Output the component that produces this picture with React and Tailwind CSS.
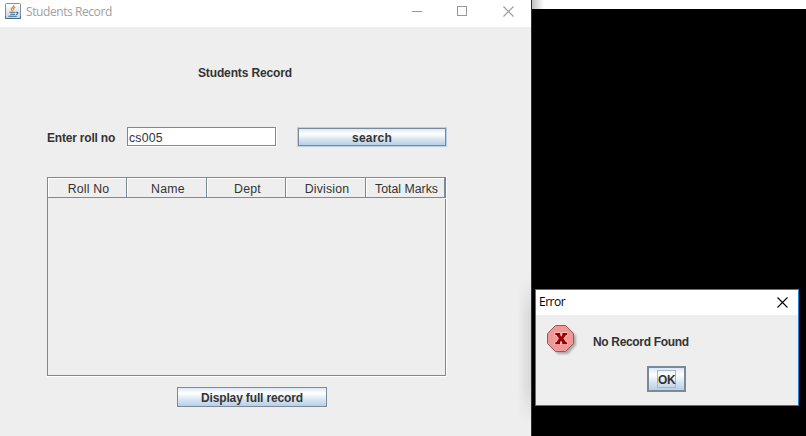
import React from "react";

const swing = "font-['Liberation_Sans',Arial,sans-serif] text-[12px] leading-[16px] text-[#333333] whitespace-nowrap";
const metal = "bg-[linear-gradient(to_bottom,#dde8f3_0%,#ffffff_30%,#dde8f3_60%,#b8cfe5_100%)]";

function JavaIcon() {
  return (
    <svg width="16" height="16" viewBox="0 0 16 16" fill="none">
      <defs>
        <linearGradient id="javaTile" x1="0" y1="0" x2="0" y2="1">
          <stop offset="0" stopColor="#ffffff" />
          <stop offset="1" stopColor="#ccd3da" />
        </linearGradient>
      </defs>
      <rect x="0.5" y="0.5" width="15" height="15" rx="1" fill="url(#javaTile)" stroke="#7890a4" />
      <path d="M.5 13V15.5H15.5V13" stroke="#44698a" />
      <path d="M8.8 2C9.4 4 5.8 5 6.4 6.6C6.6 7.3 7.5 7.6 7.5 8.3M10.3 4.2C8 5.3 8.2 6 8.8 6.9" stroke="#e58a35" strokeWidth="1.4" />
      <path d="M4.5 9.3H10.5M5.2 11.3H10M3.3 13.3H11.8M11 9.3C13.8 8.8 13.2 11 11.2 11.6" stroke="#3b6e98" strokeWidth="1.1" />
    </svg>
  );
}

function ErrorIcon() {
  return (
    <svg width="32" height="32" viewBox="0 0 32 32" className="overflow-visible">
      <defs>
        <filter id="softShadow" x="-20%" y="-20%" width="150%" height="150%">
          <feGaussianBlur stdDeviation="1.3" />
        </filter>
      </defs>
      <path d="M10 2.5H20L29 11V20L21 29H11L3 21Z" fill="#555" opacity=".45" filter="url(#softShadow)" />
      <path d="M8.5 .5H18.5L26.5 8.5V18.5L18.5 26.5H8.5L.5 18.5V8.5Z" fill="#f09898" stroke="#955b5b" />
      <path d="M8.2 8H13.2V10L14.3 11.8L15.4 10V8H20.2V10H19L16.5 13.6L19 17.2H20.2V19.2H15.2V17.4L14.1 15.6L13 17.4V19.2H8.2V17.2H9.4L11.9 13.6L9.4 10H8.2Z" fill="#990000" stroke="#ffc7c7" strokeWidth="1.4" paintOrder="stroke" />
    </svg>
  );
}

function CloseIcon({ color }) {
  return (
    <svg width="11" height="11" viewBox="0 0 11 11" stroke={color} strokeWidth="1.1">
      <path d="M.5 .5L10.5 10.5M10.5 .5L.5 10.5" />
    </svg>
  );
}

const columns = [
  ["Roll No", "w-[79px] tracking-[0.18px]"],
  ["Name", "w-[80px] tracking-[0.25px]"],
  ["Dept", "w-[79px] tracking-[0.25px]"],
  ["Division", "w-[80px] tracking-[0.2px]"],
  ["Total Marks", "w-[79px] tracking-[0px]"],
];

function RecordWindow() {
  return (
    <section className="absolute left-0 top-0 flex h-[436px] w-[531px] flex-col overflow-hidden bg-[#eeeeee]">
      <header className="flex h-[27px] shrink-0 items-start bg-white pl-[5px] pt-[3px]">
        <JavaIcon />
        <span className="ml-[5px] w-[386px] whitespace-nowrap font-['Open_Sans','Noto_Sans',sans-serif] text-[12px] leading-[17px] tracking-[-0.42px] text-[#a0a0a0]">
          Students Record
        </span>
        <i className="mt-[8px] h-px w-[10px] bg-[#999999]" />
        <i className="ml-[35px] mt-[3px] h-[10px] w-[10px] border border-[#999999]" />
        <span className="ml-[36px] mt-[3px]"><CloseIcon color="#999999" /></span>
      </header>
      <main className={`flex flex-1 flex-col ${swing}`}>
        <h1 className="ml-[198px] mt-[38px] font-bold tracking-[-0.14px]">Students Record</h1>
        <div className="ml-[47px] mt-[46px] flex h-[20px]">
          <label className="w-[80px] pt-[3px] font-bold tracking-[-0.2px]">Enter roll no</label>
          <div className="h-[20px] w-[150px] border-b border-r border-white">
            <div className="h-[19px] w-[149px] border border-[#7a8a99] bg-white pl-[1px] pt-[2px] text-[12.3px] tracking-[0.2px]">cs005</div>
          </div>
          <button className="ml-[20px] h-[20px] w-[150px] border border-[#b8cfe5]">
            <span className={`block h-[18px] border border-[#7a8a99] font-bold leading-[18px] tracking-[0.2px] ${metal}`}>search</span>
          </button>
        </div>
        <div className="ml-[47px] mt-[30px] flex h-[200px] w-[400px] flex-col border-b border-r border-white">
          <div className="flex h-[199px] w-[399px] flex-col border border-[#7a8a99]">
            <div className="flex h-[20px]">
              {columns.map(([name, size]) => (
                <div key={name} className={`h-[20px] shrink-0 border-b border-r border-[#7a8a99] pl-[3px] pt-px text-center text-[12.3px] leading-[21px] shadow-[inset_1px_1px_0_#ffffff] ${size}`}>
                  {name}
                </div>
              ))}
            </div>
            <div className="h-px w-[398px] bg-[#eeeeee]" />
          </div>
        </div>
        <button className={`ml-[177px] mt-[10px] h-[20px] w-[150px] border border-[#7a8a99] pt-px font-bold leading-[19px] tracking-[-0.14px] ${metal}`}>
          Display full record
        </button>
      </main>
    </section>
  );
}

function ErrorDialog() {
  return (
    <section className="absolute left-[535px] top-[289px] h-[117px] w-[264px] border border-[#1b81d4] bg-[#eeeeee]">
      <header className="flex h-[25px] items-start justify-between bg-white pl-[3px] pr-[10px]">
        <span className="pt-[3px] font-['Open_Sans','Noto_Sans',sans-serif] text-[12px] leading-[17px] tracking-[-0.5px] text-black">Error</span>
        <span className="mt-[7px]"><CloseIcon color="#000000" /></span>
      </header>
      <div className={`flex pl-[11px] pt-[10px] ${swing}`}>
        <ErrorIcon />
        <p className="ml-[14px] mt-[9px] font-bold tracking-[-0.33px]">No Record Found</p>
      </div>
      <button className={`ml-[111px] mt-[9px] flex h-[26px] w-[39px] items-center justify-center border-2 border-[#7a8a99] ${metal}`}>
        <span className={`h-[18px] w-[19px] border border-[#a3b8cc] pt-px text-center font-bold tracking-[-0.4px] ${swing}`}>OK</span>
      </button>
    </section>
  );
}

export default function App() {
  return (
    <div className="relative h-[436px] w-[806px] overflow-hidden bg-black">
      <div className="ml-[531px] h-[9px] bg-[linear-gradient(to_right,#bbbbbb,#ffffff_13px)]" />
      <RecordWindow />
      <div className="absolute left-[517px] top-[278px] h-[145px] w-[14px] bg-[linear-gradient(to_right,transparent,rgba(0,0,0,.09))] [mask-image:linear-gradient(to_bottom,transparent,black_25%,black_75%,transparent)]" />
      <div className="absolute left-[531px] top-0 h-[436px] w-px bg-[#303030]" />
      <ErrorDialog />
    </div>
  );
}
